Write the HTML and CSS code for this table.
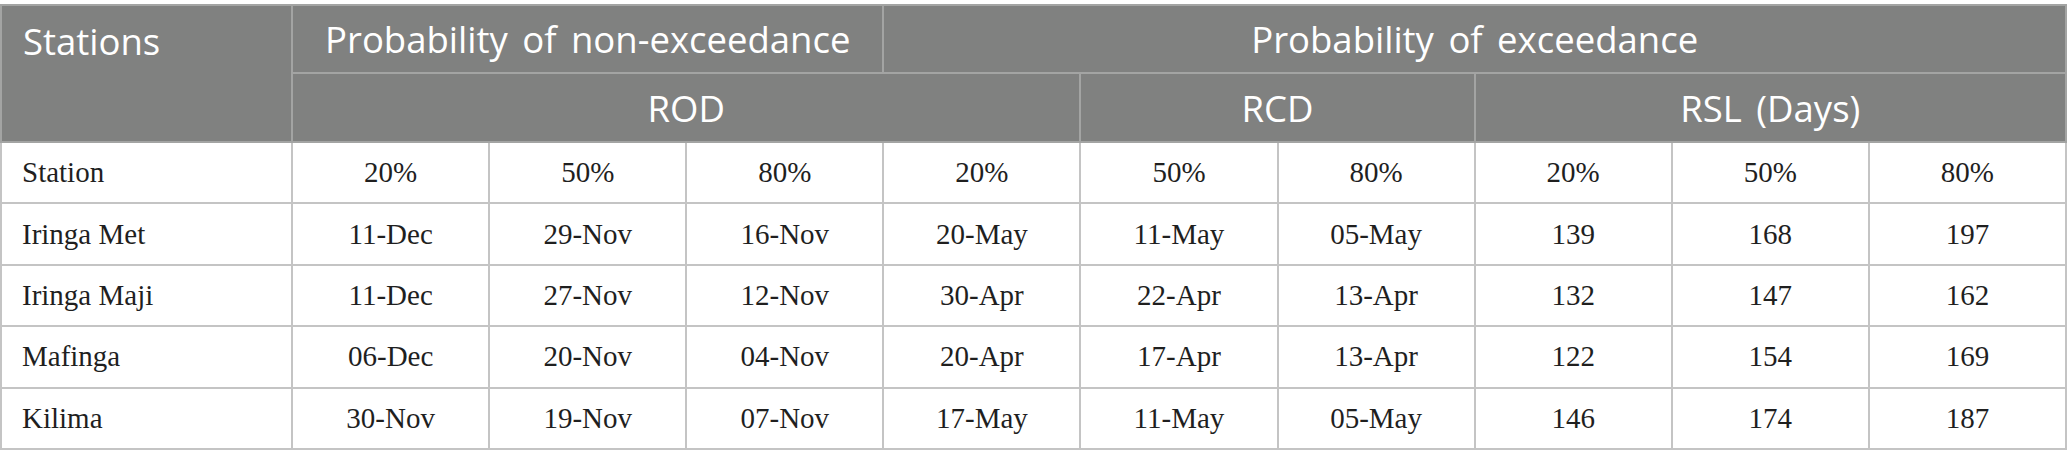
FILE: index.html
```html
<!DOCTYPE html>
<html lang="en">
<head>
<meta charset="utf-8">
<title>Rainfall season probabilities</title>
<link rel="stylesheet" href="styles.css">
</head>
<body>
<table class="data">
  <colgroup>
    <col class="c-name">
    <col class="c-val"><col class="c-val"><col class="c-val">
    <col class="c-val"><col class="c-val"><col class="c-val">
    <col class="c-val"><col class="c-val"><col class="c-val">
  </colgroup>
  <thead>
    <tr class="h1">
      <th class="left" rowspan="2">Stations</th>
      <th colspan="3">Probability of non-exceedance</th>
      <th colspan="6">Probability of exceedance</th>
    </tr>
    <tr class="h2">
      <th colspan="4">ROD</th>
      <th colspan="2">RCD</th>
      <th colspan="3">RSL (Days)</th>
    </tr>
  </thead>
  <tbody>
    <tr>
      <td class="left">Station</td>
      <td>20%</td><td>50%</td><td>80%</td>
      <td>20%</td><td>50%</td><td>80%</td>
      <td>20%</td><td>50%</td><td>80%</td>
    </tr>
    <tr>
      <td class="left">Iringa Met</td>
      <td>11-Dec</td><td>29-Nov</td><td>16-Nov</td>
      <td>20-May</td><td>11-May</td><td>05-May</td>
      <td>139</td><td>168</td><td>197</td>
    </tr>
    <tr>
      <td class="left">Iringa Maji</td>
      <td>11-Dec</td><td>27-Nov</td><td>12-Nov</td>
      <td>30-Apr</td><td>22-Apr</td><td>13-Apr</td>
      <td>132</td><td>147</td><td>162</td>
    </tr>
    <tr>
      <td class="left">Mafinga</td>
      <td>06-Dec</td><td>20-Nov</td><td>04-Nov</td>
      <td>20-Apr</td><td>17-Apr</td><td>13-Apr</td>
      <td>122</td><td>154</td><td>169</td>
    </tr>
    <tr>
      <td class="left">Kilima</td>
      <td>30-Nov</td><td>19-Nov</td><td>07-Nov</td>
      <td>17-May</td><td>11-May</td><td>05-May</td>
      <td>146</td><td>174</td><td>187</td>
    </tr>
  </tbody>
</table>
</body>
</html>
```

FILE: styles.css
```css
html, body {
  margin: 0;
  padding: 0;
  background: #ffffff;
}

body {
  padding-top: 4px;
}

.data {
  width: 2067px;
  border-collapse: collapse;
  table-layout: fixed;
}

.c-name { width: 291px; }
.c-val { width: 197px; }

.data th {
  background: #808180;
  color: #ffffff;
  font-family: "Open Sans", "Noto Sans", sans-serif;
  font-weight: 400;
  font-size: 36.5px;
  word-spacing: 5px;
  text-align: center;
  vertical-align: middle;
  padding: 0 10px;
  border: 2px solid #a3a4a3;
  white-space: nowrap;
}

.data tr.h1 th { height: 66px; }
.data tr.h2 th { height: 67px; }

.data th.left {
  text-align: left;
  vertical-align: top;
  padding: 10px 20px 0 21px;
}

.data td {
  font-family: "Liberation Serif", "Times New Roman", serif;
  font-size: 29px;
  color: #1f1f1f;
  text-align: center;
  vertical-align: middle;
  height: 59.4px;
  padding: 0 10px;
  border: 2px solid #c4c4c4;
  white-space: nowrap;
}

.data td.left {
  text-align: left;
  padding-left: 20px;
}
```
